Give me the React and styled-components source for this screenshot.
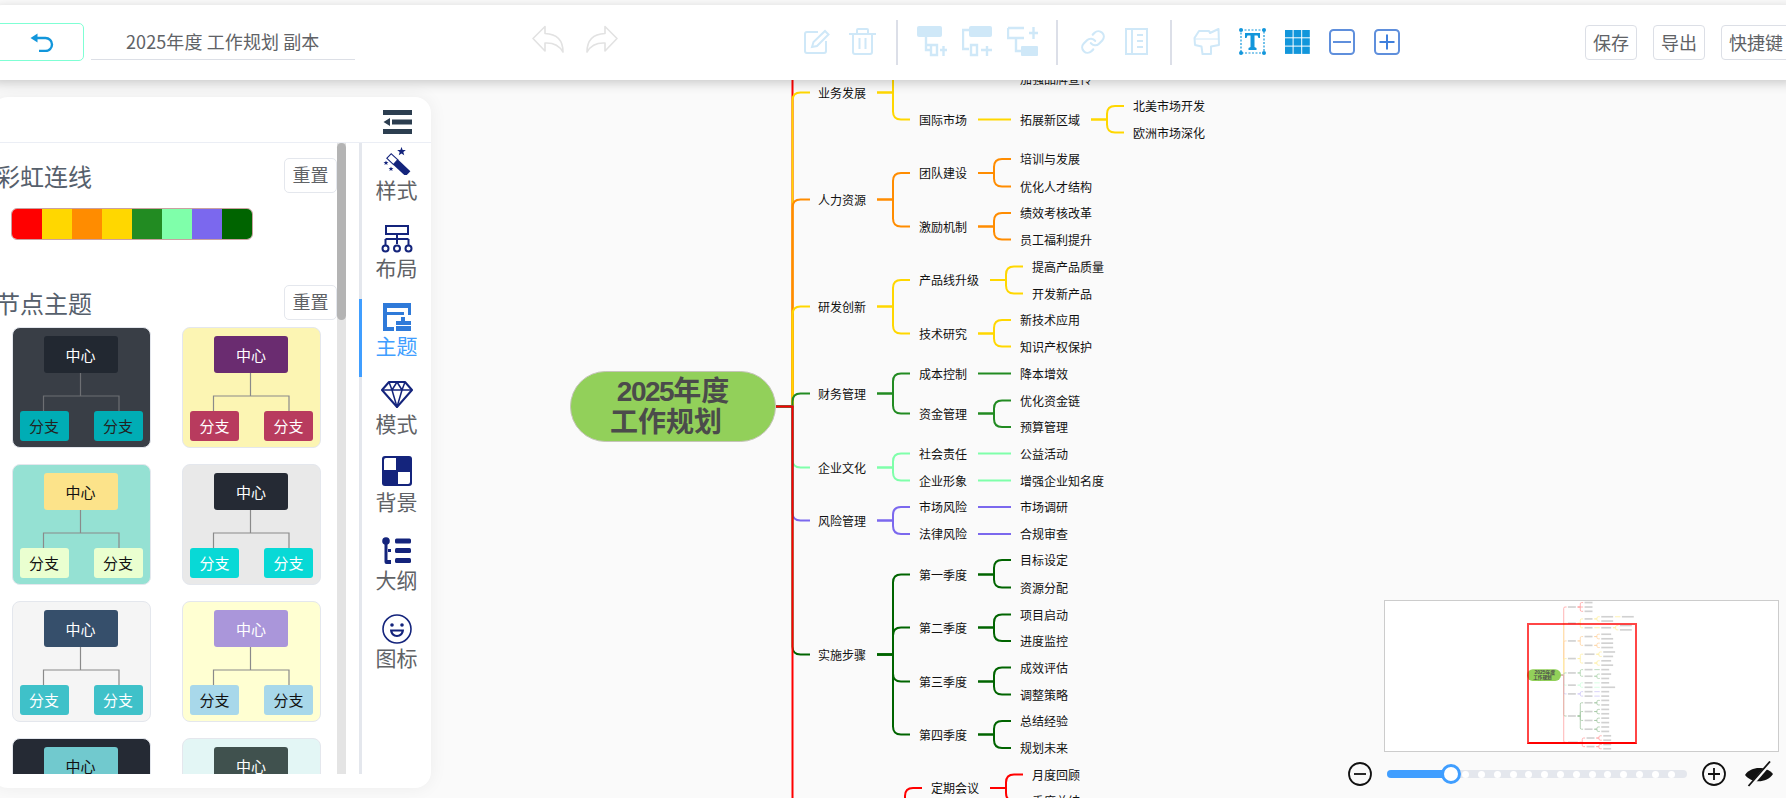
import React from "react";
import styled, { createGlobalStyle } from "styled-components";
import { Link as LinkIcon } from "lucide-react";

const FONT = `"Noto Sans CJK SC", "Noto Sans", sans-serif`;

const Global = createGlobalStyle`
  html, body { margin: 0; padding: 0; height: 798px; overflow: hidden; background: #fafafa; font-family: ${FONT}; }
  #root { height: 798px; }
  * { box-sizing: border-box; }
`;

const Page = styled.div`
  position: relative;
  width: 1786px;
  height: 798px;
  overflow: hidden;
  background: #fafafa;
`;

/* ---------- mind map canvas ---------- */
const Canvas = styled.div`
  position: absolute;
  inset: 0;
  clip-path: inset(40px 0 0 0);
`;
const Wires = styled.svg`
  position: absolute;
  left: 0;
  top: 0;
`;
const MapNode = styled.div`
  position: absolute;
  font-size: 12px;
  line-height: 16px;
  color: #111;
  white-space: nowrap;
`;
const RootNode = styled.div`
  position: absolute;
  left: 570px;
  top: 371px;
  width: 206px;
  height: 71px;
  border-radius: 36px;
  border: 1px solid #c4c4b8;
  background: #92d05a;
  color: #4b4b4b;
  font-family: "Liberation Sans", ${FONT};
  font-weight: 700;
  font-size: 28px;
  line-height: 31px;
  display: flex;
  flex-direction: column;
  align-items: center;
  justify-content: center;
`;
const RootLine = styled.span`
  padding-right: ${(p) => p.$pad || 0}px;
  white-space: nowrap;
`;
const RootDigits = styled.span`
  letter-spacing: -1.5px;
`;

const tree = [
  ["市场分析", -6, "#ff0000", [["市场调研", -33], ["竞争分析", -6], ["用户需求", 20]]],
  ["业务发展", 92.5, "#ffd700", [
    ["品牌建设", 66, 0, [["提升品牌形象", 53, 0, [["树立行业标杆", 53]]], ["加强品牌宣传", 79]]],
    ["国际市场", 119.5, 0, [["拓展新区域", 119.5, 0, [["北美市场开发", 106], ["欧洲市场深化", 132.5]]]]],
  ]],
  ["人力资源", 199.5, "#ff8c00", [
    ["团队建设", 173, 0, [["培训与发展", 159], ["优化人才结构", 186.5]]],
    ["激励机制", 226.5, 0, [["绩效考核改革", 213], ["员工福利提升", 239.5]]],
  ]],
  ["研发创新", 306.5, "#ffd700", [
    ["产品线升级", 280, 0, [["提高产品质量", 266.5], ["开发新产品", 293.5]]],
    ["技术研究", 333.5, 0, [["新技术应用", 320], ["知识产权保护", 346.5]]],
  ]],
  ["财务管理", 393.5, "#228b22", [
    ["成本控制", 373.5, 0, [["降本增效", 373.5]]],
    ["资金管理", 413.5, 0, [["优化资金链", 400.5], ["预算管理", 427]]],
  ]],
  ["企业文化", 467.5, "#7fffaa", [
    ["社会责任", 453.5, 0, [["公益活动", 453.5]]],
    ["企业形象", 480.5, 0, [["增强企业知名度", 480.5]]],
  ]],
  ["风险管理", 520.5, "#7b68ee", [
    ["市场风险", 507, 0, [["市场调研", 507]]],
    ["法律风险", 534, 0, [["合规审查", 534]]],
  ]],
  ["实施步骤", 654.5, "#006400", [
    ["第一季度", 574.5, 0, [["目标设定", 560], ["资源分配", 587.5]]],
    ["第二季度", 627.5, 0, [["项目启动", 614.5], ["进度监控", 641]]],
    ["第三季度", 681.5, 0, [["成效评估", 667.5], ["调整策略", 694.5]]],
    ["第四季度", 734.5, 0, [["总结经验", 721], ["规划未来", 748]]],
  ]],
  ["监督与评估", 814, "#ff0000", [
    ["定期会议", 788, 0, [["月度回顾", 774.5], ["季度总结", 801]]],
    ["效果评估", 840, 0, [["数据分析", 827], ["持续改进", 853]]],
  ]],
];

function elbow(sx, py, vx, cy, ex) {
  if (Math.abs(cy - py) < 1) return `M${sx} ${py}H${ex}`;
  const r = Math.min(8, Math.abs(cy - py));
  const d = cy > py ? 1 : -1;
  return `M${sx} ${py}H${vx}V${cy - d * r}Q${vx} ${cy} ${vx + r} ${cy}H${ex}`;
}

function layout() {
  const nodes = [];
  const edges = [];
  const walk = (item, x, color) => {
    const [text, y, , kids] = item;
    nodes.push({ text, x, y });
    if (!kids) return;
    const sx = x + text.length * 12 + 11;
    const vx = sx + 16;
    const ex = vx + 17;
    kids.forEach((k) => {
      edges.push({ d: elbow(sx, y, vx, k[1], ex), color });
      walk(k, ex + 9, color);
    });
  };
  tree.forEach((b) => {
    edges.push({ d: elbow(776, 406.5, 792.5, b[1], 810), color: b[2] });
    walk(b, 818, b[2]);
  });
  return { nodes, edges };
}
const { nodes, edges } = layout();

const MindMap = () => (
  <Canvas>
    <Wires width="1786" height="798" fill="none">
      {edges.map((e, i) => (
        <path key={i} d={e.d} stroke={e.color} strokeWidth="2" />
      ))}
    </Wires>
    {nodes
      .filter((n) => n.y > 70 && n.y < 810)
      .map((n, i) => (
        <MapNode key={i} style={{ left: n.x, top: n.y - 8 }}>
          {n.text}
        </MapNode>
      ))}
    <RootNode>
      <RootLine>
        <RootDigits>2025</RootDigits>年度
      </RootLine>
      <RootLine $pad={14}>工作规划</RootLine>
    </RootNode>
  </Canvas>
);

/* ---------- top toolbar ---------- */
const Toolbar = styled.header`
  position: absolute;
  left: -8px;
  top: 5px;
  width: 1802px;
  height: 75px;
  padding-right: 3px;
  background: #fff;
  border-top-left-radius: 10px;
  box-shadow: 0 3px 12px rgba(0, 0, 0, 0.2);
  display: flex;
  align-items: center;
`;
const BackButton = styled.button`
  width: 92px;
  height: 38px;
  margin-top: -1px;
  padding: 0 0 0 37px;
  background: #fff;
  border: 1px solid #7fffd4;
  border-radius: 5px;
  display: flex;
  align-items: center;
`;
const TitleField = styled.div`
  width: 264px;
  height: 36px;
  margin-left: 7px;
  margin-top: -1px;
  padding-left: 35px;
  border-bottom: 1px solid #dcdfe6;
  font-size: 18px;
  letter-spacing: 0.1px;
  line-height: 34px;
  color: #606266;
  white-space: nowrap;
`;
const IconGroup = styled.div`
  display: flex;
  align-items: center;
  gap: ${(p) => p.$gap}px;
  margin-left: ${(p) => p.$ml}px;
  margin-top: ${(p) => p.$mt ?? -2}px;
`;
const Sep = styled.span`
  width: 2px;
  height: 45px;
  margin-left: ${(p) => p.$ml}px;
  background: #dcdfe8;
`;
const Actions = styled.div`
  margin-left: auto;
  display: flex;
  gap: 16px;
  margin-top: -1px;
`;
const ActionButton = styled.button`
  height: 35px;
  padding: 0 7px;
  background: #fff;
  border: 1px solid #dcdfe6;
  border-radius: 4px;
  font-family: ${FONT};
  font-size: 18px;
  color: #606266;
  white-space: nowrap;
`;

const PALE = "#cfe8f8";
const BLUE = "#1296db";
const Box = "#5f8fdc";

const IconBack = () => (
  <svg width="24" height="19" viewBox="0 0 24 19" fill="none">
    <path d="M7 5H15.5a6.5 6.5 0 0 1 0 13H9" stroke={BLUE} strokeWidth="2.4" />
    <path d="M0.5 5L7.5 0.5V9.5Z" fill={BLUE} />
  </svg>
);
const IconUndo = ({ flip }) => (
  <svg width="32" height="28" viewBox="0 0 32 28" fill="none" style={flip ? { transform: "scaleX(-1)" } : undefined}>
    <path
      d="M13 1.5L1 13.5L13 26V18C21 17.5 27 20 31 27C31 15 25 9 13 8.5Z"
      stroke="#e2e2e2"
      strokeWidth="1.6"
      strokeLinejoin="round"
    />
  </svg>
);
const IconEdit = () => (
  <svg width="26" height="25" viewBox="0 0 26 25" fill="none" stroke={PALE} strokeWidth="2">
    <path d="M14 3H3a2 2 0 0 0-2 2v17a2 2 0 0 0 2 2h17a2 2 0 0 0 2-2V12" />
    <path d="M8 18l1.5-5L21 2l3.5 3.5L13 17Z" />
  </svg>
);
const IconTrash = () => (
  <svg width="27" height="27" viewBox="0 0 27 27" fill="none" stroke={PALE} strokeWidth="2">
    <path d="M0 6H27M8 6V2a1 1 0 0 1 1-1h9a1 1 0 0 1 1 1V6" />
    <path d="M4 7V24a2 2 0 0 0 2 2H21a2 2 0 0 0 2-2V7M10.500 10V21M16.500 10V21" />
  </svg>
);
const IconChildAdd = () => (
  <svg width="31" height="31" viewBox="0 0 31 31" fill="none" stroke={PALE} strokeWidth="2.4">
    <rect x="0" y="0" width="25" height="11" rx="2" fill={PALE} stroke="none" />
    <path d="M9 11V19H14M9 19V24H14M14 19H20V29H14V19M23 24H30M26.500 20V30" />
  </svg>
);
const IconSiblingAdd = () => (
  <svg width="31" height="31" viewBox="0 0 31 31" fill="none" stroke={PALE} strokeWidth="2.4">
    <rect x="7" y="0" width="23" height="11" rx="2" fill={PALE} stroke="none" />
    <path d="M7 4H1V23H7M9 19H15V29H9ZM19 24H30M25 20V30" />
  </svg>
);
const IconParentAdd = () => (
  <svg width="31" height="31" viewBox="0 0 31 31" fill="none" stroke={PALE} strokeWidth="2.4">
    <rect x="14" y="20" width="17" height="10" rx="1" fill={PALE} stroke="none" />
    <path d="M1 2H17M1 2V12H17M9 12V25H14M22 7H31M26.500 1V13" />
  </svg>
);
const IconBook = () => (
  <svg width="23" height="27" viewBox="0 0 23 27" fill="none" stroke={PALE} strokeWidth="2">
    <rect x="1" y="1" width="21" height="25" />
    <path d="M7 1V26M12 7H18M12 13H18M12 19H18" />
  </svg>
);
const IconBrush = () => (
  <svg width="27" height="27" viewBox="0 0 27 27" fill="none" stroke={PALE} strokeWidth="2" strokeLinejoin="round">
    <path d="M6 3H16L17 5L25.500 1L26 17L18 18.500V26H9.500L8.500 18.500L2 17L1.500 10Z" />
    <path d="M2 11H26" strokeWidth="1" />
  </svg>
);
const IconText = () => (
  <svg width="27" height="27" viewBox="0 0 27 27" fill="none">
    <rect x="2" y="2" width="23" height="23" stroke={BLUE} strokeWidth="1.200" strokeDasharray="2 1.500" />
    <circle cx="2" cy="2" r="2" fill={BLUE} />
    <circle cx="25" cy="2" r="2" fill={BLUE} />
    <circle cx="2" cy="25" r="2" fill={BLUE} />
    <circle cx="25" cy="25" r="2" fill={BLUE} />
    <path d="M6 5H21V10H19.500L18.500 7.500H15.500V19L17.500 20V22H9.500V20L11.500 19V7.500H8.500L7.500 10H6Z" fill={BLUE} />
  </svg>
);
const IconGrid = () => (
  <svg width="25" height="24" viewBox="0 0 25 24">
    {[0, 1, 2].map((r) =>
      [0, 1, 2].map((c) => <rect key={`${r}${c}`} x={c * 8.6} y={r * 8.300} width="7.600" height="7.300" fill={BLUE} />)
    )}
  </svg>
);
const IconZoomBox = ({ plus }) => (
  <svg width="26" height="26" viewBox="0 0 26 26" fill="none" stroke={Box}>
    <rect x="1" y="1" width="24" height="24" rx="3.500" strokeWidth="2" />
    <path d={plus ? "M5.500 13H20.500M13 5.500V20.500" : "M4 13H22"} strokeWidth="2" stroke={plus ? "#3f7fdc" : Box} />
  </svg>
);

const TopBar = () => (
  <Toolbar>
    <BackButton aria-label="返回">
      <IconBack />
    </BackButton>
    <TitleField>2025年度 工作规划 副本</TitleField>
    <IconGroup $ml={177} $gap={22} $mt={-8}>
      <IconUndo />
      <IconUndo flip />
    </IconGroup>
    <IconGroup $ml={186} $gap={19}>
      <IconEdit />
      <IconTrash />
    </IconGroup>
    <Sep $ml={20} />
    <IconGroup $ml={19} $gap={14}>
      <IconChildAdd />
      <IconSiblingAdd />
      <IconParentAdd />
    </IconGroup>
    <Sep $ml={18} />
    <IconGroup $ml={22} $gap={19}>
      <LinkIcon size={26} color={PALE} strokeWidth={2} />
      <IconBook />
    </IconGroup>
    <Sep $ml={22} />
    <IconGroup $ml={21} $gap={19}>
      <IconBrush />
      <IconText />
      <IconGrid />
      <IconZoomBox />
      <IconZoomBox plus />
    </IconGroup>
    <Actions>
      <ActionButton>保存</ActionButton>
      <ActionButton>导出</ActionButton>
      <ActionButton>快捷键</ActionButton>
    </Actions>
  </Toolbar>
);

/* ---------- left panel ---------- */
const Panel = styled.aside`
  position: absolute;
  left: -8px;
  top: 97px;
  width: 439px;
  height: 691px;
  background: #fff;
  border-radius: 16px;
  box-shadow: 0 0 18px rgba(0, 0, 0, 0.06);
`;
const PanelHead = styled.div`
  height: 46px;
  padding: 13px 19px 0 0;
  border-bottom: 1px solid #ebeef5;
  display: flex;
  justify-content: flex-end;
`;
const PanelBody = styled.div`
  height: 631px;
  display: flex;
`;
const Content = styled.div`
  width: 345px;
  padding-top: 15px;
  overflow: hidden;
`;
const SectionHead = styled.div`
  height: 35px;
  padding-left: 4px;
  display: flex;
  justify-content: space-between;
  align-items: center;
`;
const SectionTitle = styled.h3`
  margin: 0;
  font-size: 24px;
  font-weight: 400;
  color: #56606c;
  line-height: 35px;
`;
const ResetButton = styled.button`
  width: 53px;
  height: 35px;
  padding: 0 0 3px;
  background: #fff;
  border: 1px solid #e4e7ed;
  border-radius: 5px;
  font-family: ${FONT};
  font-size: 18px;
  color: #606266;
`;
const Rainbow = styled.div`
  width: 242px;
  height: 32px;
  margin: 15px 0 45px 19px;
  display: flex;
  border: 1px solid #c9a0a0;
  border-radius: 6px;
  overflow: hidden;
`;
const Swatch = styled.span`
  flex: 1;
  background: ${(p) => p.$c};
`;
const CardGrid = styled.div`
  margin: 7px 0 0 19.500px;
  display: grid;
  grid-template-columns: 139px 139px;
  column-gap: 31.500px;
  row-gap: 16px;
`;
const Card = styled.div`
  height: 121px;
  padding-top: 8px;
  border: 1px solid #e4e7ed;
  border-radius: 8px;
  background: ${(p) => p.$bg};
`;
const Centre = styled.div`
  width: 74px;
  height: 37px;
  margin-left: 31px;
  border-radius: 3px;
  background: ${(p) => p.$bg};
  color: ${(p) => p.$fg};
  font-size: 15px;
  line-height: 37px;
  text-align: center;
`;
const Connector = styled.svg`
  display: block;
`;
const BranchRow = styled.div`
  padding: 0 7px;
  display: flex;
  justify-content: space-between;
`;
const Branch = styled.div`
  width: 49px;
  height: 30px;
  border-radius: 3px;
  background: ${(p) => p.$bg};
  color: ${(p) => p.$fg};
  font-size: 15px;
  line-height: 30px;
  text-align: center;
`;
const ScrollTrack = styled.div`
  width: 9px;
  background: #e4e4e4;
`;
const ScrollThumb = styled.div`
  height: 177px;
  border-radius: 5px;
  background: #b4b4b4;
`;
const TabBar = styled.nav`
  margin-left: 13px;
  width: 72px;
  border-left: 3px solid #e4e7ed;
`;
const Tab = styled.div`
  position: relative;
  height: 78px;
  padding-top: 4px;
  display: flex;
  flex-direction: column;
  align-items: center;
  font-size: 21px;
  line-height: 20px;
  color: ${(p) => (p.$active ? "#409eff" : "#606266")};
  &::before {
    content: "";
    display: ${(p) => (p.$active ? "block" : "none")};
    position: absolute;
    left: -3px;
    top: 0;
    bottom: 0;
    width: 3px;
    background: #409eff;
  }
`;
const TabIcon = styled.div`
  height: 27px;
  margin-bottom: 5px;
  display: flex;
  align-items: center;
  justify-content: center;
  transform: translateY(${(p) => p.$lift || 0}px);
`;

const NAVY = "#14247c";
const starPoints = (cx, cy, r) =>
  Array.from({ length: 10 }, (_, i) => {
    const a = (Math.PI / 5) * i - Math.PI / 2;
    const q = i % 2 ? r * 0.42 : r;
    return `${(cx + q * Math.cos(a)).toFixed(2)},${(cy + q * Math.sin(a)).toFixed(2)}`;
  }).join(" ");

const IconMenu = () => (
  <svg width="29" height="24" viewBox="0 0 29 24">
    <path d="M0 0H29V5H0ZM9 9.500H29V14.500H9ZM0 19H29V24H0Z" fill="#2c3e50" />
    <path d="M0.500 12L7 8V16Z" fill="#2c3e50" />
  </svg>
);
const IconWand = () => (
  <svg width="28" height="28" viewBox="0 0 28 28">
    <polygon points={starPoints(18.5, 4.5, 4.6)} fill={NAVY} />
    <polygon points={starPoints(3, 16, 2.6)} fill={NAVY} />
    <polygon points={starPoints(8, 22, 2.6)} fill={NAVY} />
    <g transform="translate(6 9) rotate(43)">
      <rect x="0" y="-3.200" width="9" height="6.400" fill="#fff" stroke={NAVY} strokeWidth="1.100" />
      <rect x="9" y="-3.500" width="17" height="7" fill={NAVY} />
    </g>
  </svg>
);
const IconLayout = () => (
  <svg width="32" height="28" viewBox="0 0 32 28" fill="none" stroke={NAVY} strokeWidth="2">
    <rect x="5" y="1" width="22" height="8" />
    <path d="M16 9V19M4.500 14H27.500M4.500 14V20M27.500 14V20" />
    <circle cx="4.500" cy="23.500" r="3" />
    <circle cx="16" cy="23.500" r="3" />
    <circle cx="27.500" cy="23.500" r="3" />
  </svg>
);
const IconTheme = () => (
  <svg width="28" height="28" viewBox="0 0 28 28" fill="#2f7ad9">
    <path d="M0 0H28V12H25V5H4V9H21V12H4V24H11V28H0Z" />
    <path d="M18 14H22V18H28V22H13V18H18ZM13 23H28V28H13Z" />
  </svg>
);
const IconGem = () => (
  <svg width="32" height="27" viewBox="0 0 32 27" fill="none" stroke={NAVY} strokeWidth="2" strokeLinejoin="round">
    <path d="M8 1H24L31 9L16 26L1 9Z" />
    <path d="M1 9H31M8 1L11 9L16 26L21 9L24 1M11 9L16 1L21 9" strokeWidth="1.500" />
  </svg>
);
const IconBackdrop = () => (
  <svg width="30" height="30" viewBox="0 0 30 30">
    <rect width="30" height="30" rx="3" fill={NAVY} />
    <path d="M2 4a2 2 0 0 1 2-2H14V14H2ZM16 16H28V26a2 2 0 0 1-2 2H16Z" fill="#fff" />
  </svg>
);
const IconOutline = () => (
  <svg width="29" height="27" viewBox="0 0 29 27" fill={NAVY}>
    <circle cx="4" cy="4" r="3.800" />
    <path d="M2.500 6H5.500V23H9V27H4.500A2 2 0 0 1 2.500 25Z" />
    <path d="M6 12H9V15H6Z" />
    <rect x="13" y="1.500" width="16" height="5" rx="1.500" />
    <rect x="13" y="11" width="16" height="5" rx="1.500" />
    <rect x="13" y="21" width="16" height="5" rx="1.500" />
  </svg>
);
const IconSmile = () => (
  <svg width="30" height="30" viewBox="0 0 30 30" fill="none">
    <circle cx="15" cy="15" r="14" stroke={NAVY} strokeWidth="1.600" />
    <circle cx="10" cy="11" r="1.800" fill={NAVY} />
    <circle cx="20" cy="11" r="1.800" fill={NAVY} />
    <path d="M8 15.500H22C22 20 19 23 15 23C11 23 8 20 8 15.500ZM10.500 17.500C11 19.500 13 21 15 21C17 21 19 19.500 19.500 17.500Z" fill={NAVY} fillRule="evenodd" />
  </svg>
);

const rainbow = ["#ff0000", "#ffd700", "#ff8c00", "#ffd700", "#228b22", "#7fffaa", "#7b68ee", "#006400"];
const themes = [
  { bg: "#393e46", c: "#222831", cf: "#fff", b: "#00adb5", bf: "#222", line: "#6d6f73" },
  { bg: "#fcf5b3", c: "#6a2c70", cf: "#fff", b: "#b83b5e", bf: "#fff", line: "#8a8a8a" },
  { bg: "#95e1d3", c: "#fce38a", cf: "#111", b: "#eaffd0", bf: "#111", line: "#8a8a8a" },
  { bg: "#e9e9e9", c: "#252a34", cf: "#fff", b: "#08d9d6", bf: "#fff", line: "#8a8a8a" },
  { bg: "#f5f5f5", c: "#364f6b", cf: "#fff", b: "#3fc1c9", bf: "#fff", line: "#8a8a8a" },
  { bg: "#ffffd2", c: "#aa96da", cf: "#fff", b: "#a8d8ea", bf: "#111", line: "#8a8a8a" },
  { bg: "#252a34", c: "#71c9ce", cf: "#111", b: "#a6e3e9", bf: "#111", line: "#8a8a8a" },
  { bg: "#e3f6f5", c: "#40514e", cf: "#fff", b: "#2f89fc", bf: "#fff", line: "#8a8a8a" },
];
const tabs = [
  ["样式", <IconWand />],
  ["布局", <IconLayout />],
  ["主题", <IconTheme />, true],
  ["模式", <IconGem />],
  ["背景", <IconBackdrop />, false, -2],
  ["大纲", <IconOutline />],
  ["图标", <IconSmile />],
];

const SidePanel = () => (
  <Panel>
    <PanelHead>
      <IconMenu />
    </PanelHead>
    <PanelBody>
      <Content>
        <SectionHead>
          <SectionTitle>彩虹连线</SectionTitle>
          <ResetButton>重置</ResetButton>
        </SectionHead>
        <Rainbow>
          {rainbow.map((c, i) => (
            <Swatch key={i} $c={c} />
          ))}
        </Rainbow>
        <SectionHead>
          <SectionTitle>节点主题</SectionTitle>
          <ResetButton>重置</ResetButton>
        </SectionHead>
        <CardGrid>
          {themes.map((t, i) => (
            <Card key={i} $bg={t.bg}>
              <Centre $bg={t.c} $fg={t.cf}>中心</Centre>
              <Connector width="137" height="38" viewBox="0 0 137 38" fill="none" stroke={t.line} strokeWidth="1.200">
                <path d="M67.500 0V23M30.500 38V23H106V38" />
              </Connector>
              <BranchRow>
                <Branch $bg={t.b} $fg={t.bf}>分支</Branch>
                <Branch $bg={t.b} $fg={t.bf}>分支</Branch>
              </BranchRow>
            </Card>
          ))}
        </CardGrid>
      </Content>
      <ScrollTrack>
        <ScrollThumb />
      </ScrollTrack>
      <TabBar>
        {tabs.map(([label, icon, active, lift]) => (
          <Tab key={label} $active={active}>
            <TabIcon $lift={lift}>{icon}</TabIcon>
            {label}
          </Tab>
        ))}
      </TabBar>
    </PanelBody>
  </Panel>
);

/* ---------- minimap + zoom ---------- */
const Dock = styled.div`
  position: absolute;
  left: 1348px;
  top: 600px;
  width: 431px;
  display: flex;
  flex-direction: column;
  align-items: flex-end;
`;
const MiniMap = styled.div`
  position: relative;
  width: 395px;
  height: 152px;
  background: #fff;
  border: 1px solid #ccc;
`;
const Viewport = styled.div`
  position: absolute;
  left: 142px;
  top: 22px;
  width: 110px;
  height: 121px;
  border: 2px solid rgba(255, 0, 0, 0.72);
  border-bottom-color: #f00;
`;
const Controls = styled.div`
  width: 431px;
  height: 28px;
  margin-top: 8px;
  padding-right: 6px;
  display: flex;
  align-items: center;
`;
const Track = styled.div`
  position: relative;
  width: 300px;
  height: 8px;
  margin: 0 15px;
  border-radius: 4px;
  background: #e4e7ed;
  display: flex;
  align-items: center;
  gap: 8.800px;
`;
const Fill = styled.div`
  width: 66px;
  height: 8px;
  margin-right: 0.500px;
  border-radius: 4px 0 0 4px;
  background: #409eff;
`;
const Stop = styled.i`
  flex: none;
  width: 7px;
  height: 7px;
  border-radius: 50%;
  background: #fff;
`;
const Thumb = styled.div`
  position: absolute;
  left: 54px;
  top: -6px;
  width: 20px;
  height: 20px;
  border: 3px solid #409eff;
  border-radius: 50%;
  background: #fff;
`;
const EyeSlot = styled.div`
  margin-left: 19px;
  height: 26px;
`;

const CircleBtn = ({ plus }) => (
  <svg width="24" height="24" viewBox="0 0 24 24" fill="none" stroke="#111" strokeWidth="1.800">
    <circle cx="12" cy="12" r="11" />
    <path d={plus ? "M6 12H18M12 6V18" : "M6 12H18"} />
  </svg>
);
const IconEyeOff = () => (
  <svg width="28" height="26" viewBox="0 0 28 26">
    <path d="M0 14C6 5 21 5 28 13C22 22 7 23 0 14Z" fill="#111" />
    <path d="M5 25.500L26 1" stroke="#fafafa" strokeWidth="3.500" />
    <path d="M3.500 25L25 0.500" stroke="#111" strokeWidth="1.800" />
  </svg>
);

const S = 0.165;
const MiniTree = () => (
  <svg width="393" height="150" viewBox="0 0 393 150">
    <g transform={`translate(${142 - 570 * S} ${74 - 406 * S}) scale(${S})`}>
      <g opacity="0.35" fill="none" strokeWidth="5">
        {edges.map((e, i) => (
          <path key={i} d={e.d} stroke={e.color} />
        ))}
      </g>
      {nodes.map((n, i) => (
        <rect key={i} x={n.x} y={n.y - 5} width={n.text.length * 12} height="10" fill="#999" opacity="0.45" />
      ))}
      <rect x="570" y="371" width="206" height="71" rx="35" fill="#92d05a" />
      <text x="615" y="401" fontSize="30" fontWeight="700" fill="#4b4b4b" fontFamily="Liberation Sans, Noto Sans CJK SC, sans-serif">2025年度</text>
      <text x="608" y="432" fontSize="28" fontWeight="700" fill="#4b4b4b" fontFamily="Liberation Sans, Noto Sans CJK SC, sans-serif">工作规划</text>
    </g>
  </svg>
);

const stops = Array.from({ length: 14 });

const Navigator = () => (
  <Dock>
    <MiniMap>
      <MiniTree />
      <Viewport />
    </MiniMap>
    <Controls>
      <CircleBtn />
      <Track>
        <Fill />
        {stops.map((_, i) => (
          <Stop key={i} />
        ))}
        <Thumb />
      </Track>
      <CircleBtn plus />
      <EyeSlot>
        <IconEyeOff />
      </EyeSlot>
    </Controls>
  </Dock>
);

export default function App() {
  return (
    <Page>
      <Global />
      <MindMap />
      <TopBar />
      <SidePanel />
      <Navigator />
    </Page>
  );
}
